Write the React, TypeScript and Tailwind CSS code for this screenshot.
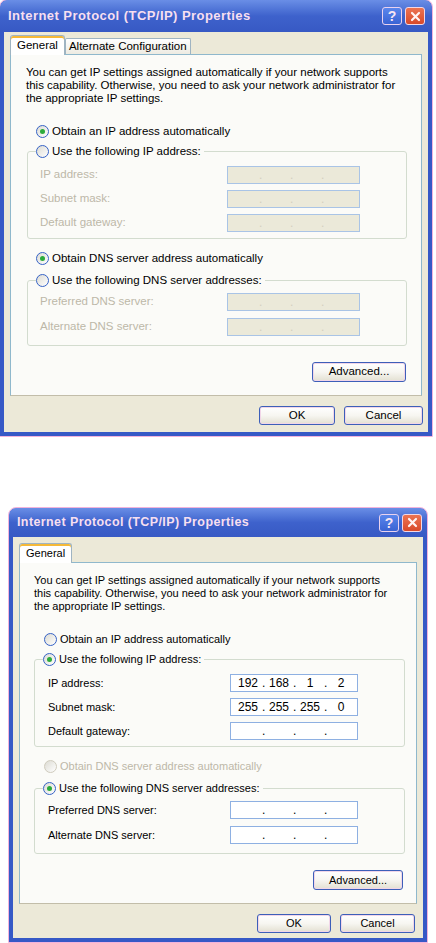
import { Fragment } from "react";
import clsx from "clsx";

const sans = "font-['Liberation_Sans',Arial,sans-serif]";

type Variant = "first" | "second";

function Radio({ checked, disabled }: { checked?: boolean; disabled?: boolean }) {
  return (
    <span
      className={clsx(
        "inline-flex h-[13px] w-[13px] shrink-0 items-center justify-center rounded-full border bg-gradient-to-br from-[#dcdbd3] to-white",
        disabled ? "border-[#cfcbbd]" : "border-[#3562c6]"
      )}
    >
      {checked && <span className="h-[5px] w-[5px] rounded-full bg-[#2cab3c]" />}
    </span>
  );
}

function RadioRow({ label, checked, disabled }: { label: string; checked?: boolean; disabled?: boolean }) {
  return (
    <span className="flex h-[15px] items-center gap-[3px]">
      <Radio checked={checked} disabled={disabled} />
      <span className={disabled ? "text-[#bdb8a8]" : "text-black"}>{label}</span>
    </span>
  );
}

function IpBox({ value, disabled, wide }: { value?: string[]; disabled?: boolean; wide?: boolean }) {
  return (
    <div
      className={clsx(
        "flex h-[18px] items-center border pl-[3px] text-[12px] leading-none",
        wide ? "w-[133px]" : "w-[128px]",
        disabled ? "border-[#a9c4e6] bg-[#ebe9d9] text-[#d3cfbf]" : "border-[#8eb0e2] bg-white text-black"
      )}
    >
      {[0, 1, 2, 3].map((i) => (
        <Fragment key={i}>
          {i > 0 && <span className="w-[3px] text-center">.</span>}
          <span className="w-[28px] text-center">{value?.[i] ?? ""}</span>
        </Fragment>
      ))}
    </div>
  );
}

function XpButton({ label, className }: { label: string; className: string }) {
  return (
    <div
      className={clsx(
        "flex items-center justify-center rounded-[3px] border border-[#3d5fb9] bg-gradient-to-b from-white via-[#f7f6f1] to-[#e3e0d2] text-black shadow-[inset_0_0_0_1px_#f1d6e8]",
        className
      )}
    >
      {label}
    </div>
  );
}

type Row = { label: string; value?: string[] };

function Group({
  legend,
  checked,
  rows,
  enabled,
  variant,
  dns,
}: {
  legend: string;
  checked: boolean;
  rows: Row[];
  enabled: boolean;
  variant: Variant;
  dns?: boolean;
}) {
  return (
    <fieldset
      className={clsx(
        "rounded-[3px] border border-[#d3dccf] px-[8px]",
        variant === "first" ? "ml-[16px] mr-[14px]" : "ml-[14px] mr-[11px]",
        dns ? "pb-[9px]" : "pb-[6px]"
      )}
    >
      <legend className="pr-[3px]">
        <RadioRow label={legend} checked={checked} />
      </legend>
      <div
        className={clsx(
          "flex flex-col pr-[38px]",
          variant === "first" ? "pl-[4px]" : "pl-[5px]",
          dns ? "gap-[7px] pt-[5px]" : "gap-[6px] pt-[7px]"
        )}
      >
        {rows.map((r) => (
          <div key={r.label} className="flex items-center justify-between">
            <span className={enabled ? "text-black" : "text-[#bdb8a8]"}>{r.label}</span>
            <IpBox value={r.value} disabled={!enabled} wide={variant === "first"} />
          </div>
        ))}
      </div>
    </fieldset>
  );
}

function Dialog({ variant }: { variant: Variant }) {
  const first = variant === "first";
  return (
    <div
      className={clsx(
        "flex flex-col rounded-t-[7px] bg-[#3659c6] px-[4px] pb-[4px] outline outline-1 outline-[#f2b3dc]",
        first ? "h-[436px] w-[432px]" : "h-[434px] w-[418px]"
      )}
    >
      <div
        className={clsx(
          "-mx-[4px] flex items-center justify-between rounded-t-[7px] bg-gradient-to-b from-[#6a8ee6] via-[#3e62cc] to-[#3759c4] pl-[8px]",
          first ? "h-[32px] pr-[7px]" : "h-[29px] pr-[5px]"
        )}
      >
        <span
          className={clsx(
            "font-bold text-[#f7dff0]",
            first ? "text-[13px] tracking-[0.45px]" : "text-[12.5px] tracking-[0.4px]"
          )}
        >
          Internet Protocol (TCP/IP) Properties
        </span>
        <div className="flex gap-[3px]">
          <div className="flex h-[18px] w-[20px] items-center justify-center rounded-[3px] border border-[#e9d2ef] bg-gradient-to-b from-[#5a86ec] to-[#3a63d4] text-[14px] font-bold leading-none text-[#f7e6f3]">
            ?
          </div>
          <div className="flex h-[18px] w-[20px] items-center justify-center rounded-[3px] border border-[#f3d7e4] bg-gradient-to-b from-[#ec7352] to-[#d8492a]">
            <svg width="11" height="11" viewBox="0 0 11 11">
              <path d="M2 2 L9 9 M9 2 L2 9" stroke="#fff3f3" strokeWidth="2.2" strokeLinecap="round" />
            </svg>
          </div>
        </div>
      </div>

      <div
        className={clsx(
          "flex flex-1 flex-col bg-[#ece9d8] px-[6px]",
          first ? "pt-[3px] text-[11.5px]" : "pt-[6px] text-[11px]"
        )}
      >
        <div className="flex h-[19px] items-end">
          <div className="relative z-10 -mb-px flex h-[20px] items-center rounded-t-[3px] border border-b-0 border-[#9fb4c2] bg-white px-[6px] shadow-[inset_0_2px_0_#f5b938]">
            General
          </div>
          {first && (
            <div className="flex h-[16px] items-center rounded-t-[2px] border border-b-0 border-[#9fb4c2] bg-gradient-to-b from-white to-[#edebe2] px-[3px]">
              Alternate Configuration
            </div>
          )}
        </div>

        <div className="flex h-[342px] flex-col border border-[#8fb8cc] border-b-[#c2bda9] bg-[#fbfbf8] pt-[11px]">
          <p className={clsx("leading-[13px]", first ? "pl-[15px]" : "pl-[14px]")}>
            You can get IP settings assigned automatically if your network supports
            <br />
            this capability. Otherwise, you need to ask your network administrator for
            <br />
            the appropriate IP settings.
          </p>

          <div className={clsx("mt-[19px]", first ? "pl-[25px]" : "pl-[24px]")}>
            <RadioRow label="Obtain an IP address automatically" checked={first} />
          </div>
          <div className="mt-[5px]">
            <Group
              variant={variant}
              legend="Use the following IP address:"
              checked={!first}
              enabled={!first}
              rows={[
                { label: "IP address:", value: first ? undefined : ["192", "168", "1", "2"] },
                { label: "Subnet mask:", value: first ? undefined : ["255", "255", "255", "0"] },
                { label: "Default gateway:" },
              ]}
            />
          </div>

          <div className={clsx("mt-[12px]", first ? "pl-[25px]" : "pl-[24px]")}>
            <RadioRow label="Obtain DNS server address automatically" checked={first} disabled={!first} />
          </div>
          <div className="mt-[7px]">
            <Group
              variant={variant}
              dns
              legend="Use the following DNS server addresses:"
              checked={!first}
              enabled={!first}
              rows={[{ label: "Preferred DNS server:" }, { label: "Alternate DNS server:" }]}
            />
          </div>

          <div className={clsx("mt-[16px] flex justify-end", first ? "pr-[15px]" : "pr-[13px]")}>
            <XpButton label="Advanced..." className={first ? "h-[20px] w-[94px]" : "h-[20px] w-[90px]"} />
          </div>
        </div>

        <div className={clsx("mt-[10px] flex justify-end gap-[9px]", first ? "-mr-[1px]" : "pr-[2px]")}>
          <XpButton label="OK" className={first ? "h-[19px] w-[76px]" : "h-[19px] w-[74px]"} />
          <XpButton label="Cancel" className={first ? "h-[19px] w-[79px]" : "h-[19px] w-[75px]"} />
        </div>
      </div>
    </div>
  );
}

export default function App() {
  return (
    <div className={clsx("flex min-h-[943px] flex-col bg-white", sans)}>
      <Dialog variant="first" />
      <div className="ml-[9px] mt-[72px]">
        <Dialog variant="second" />
      </div>
    </div>
  );
}
